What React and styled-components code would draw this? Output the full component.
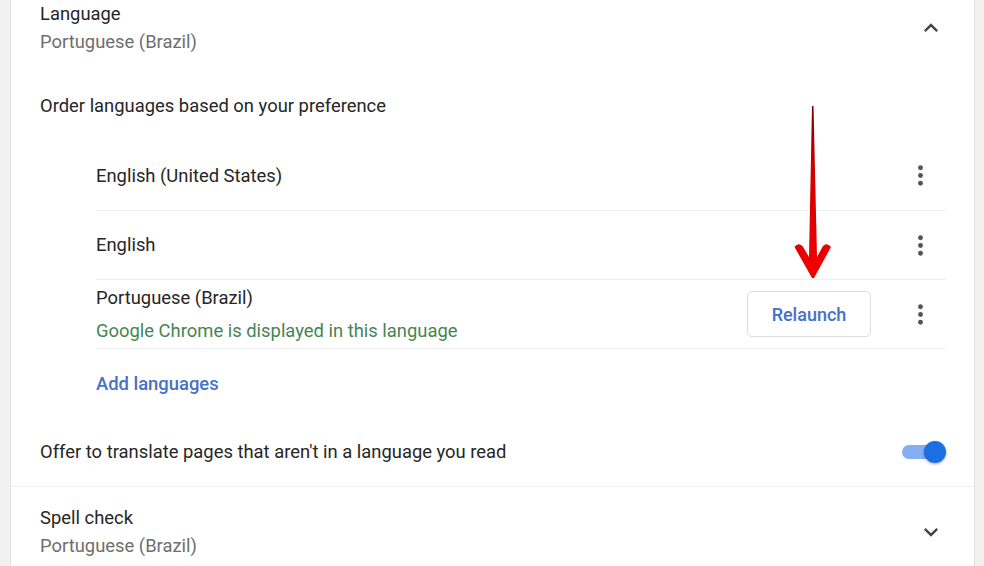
import React from "react";
import styled, { createGlobalStyle } from "styled-components";

const GlobalStyle = createGlobalStyle`
  html, body {
    margin: 0;
    padding: 0;
    background: #f1f1f1;
  }
  body {
    font-family: Roboto, "Liberation Sans", Arial, sans-serif;
  }
`;

const Page = styled.div`
  position: relative;
  width: 984px;
  height: 566px;
  overflow: hidden;
  background: #f1f1f1;
`;

const Card = styled.div`
  margin: 0 9px 0 10px;
  height: 566px;
  background: #fff;
  border-left: 1px solid #e0e0e0;
  border-right: 1px solid #e0e0e0;
`;

const Section = styled.div`
  padding: ${(p) => (p.$first ? "0" : "17px")} 28px 0 29px;
  border-bottom: ${(p) => (p.$divided ? "1px solid #eceeef" : "none")};
`;

const Header = styled.div`
  display: flex;
  align-items: center;
  justify-content: space-between;
`;

const Title = styled.div`
  font-size: 18.4px;
  line-height: 28px;
  color: #262626;
`;

const Sub = styled.div`
  font-size: 18.4px;
  line-height: 28px;
  color: #6e6e6e;
`;

const IconButton = styled.div`
  width: 30px;
  height: 30px;
  display: flex;
  align-items: center;
  justify-content: center;
  color: #444;
`;

const Label = styled.div`
  margin-top: 36px;
  font-size: 18.4px;
  line-height: 28px;
  color: #262626;
`;

const List = styled.div`
  margin: 21px 0 0 56px;
`;

const Row = styled.div`
  display: flex;
  align-items: center;
  height: 69px;
  border-top: ${(p) => (p.$first ? "none" : "1px solid #eceeef")};
  box-sizing: border-box;
`;

const RowText = styled.div`
  flex: 1;
`;

const Green = styled.div`
  margin-top: 5px;
  font-size: 18.4px;
  line-height: 28px;
  color: #448553;
`;

const Relaunch = styled.button`
  width: 124px;
  height: 46px;
  margin-right: 29px;
  background: #fff;
  border: 1px solid #dadce0;
  border-radius: 5px;
  font-family: inherit;
  font-size: 18px;
  font-weight: 500;
  color: #4571c7;
`;

const Kebab = styled.div`
  width: 40px;
  height: 40px;
  margin-right: 6px;
  display: flex;
  align-items: center;
  justify-content: center;
  color: #555;
`;

const AddRow = styled.div`
  display: flex;
  align-items: center;
  height: 70px;
  border-top: 1px solid #eceeef;
  box-sizing: border-box;
  font-size: 18.4px;
  font-weight: 500;
  color: #4571c7;
`;

const ToggleRow = styled.div`
  display: flex;
  align-items: center;
  justify-content: space-between;
  height: 68px;
`;

const Toggle = styled.div`
  position: relative;
  width: 44px;
  height: 22px;
`;

const Track = styled.div`
  position: absolute;
  left: 0;
  top: 4px;
  width: 38px;
  height: 14px;
  border-radius: 7px;
  background: ${(p) => (p.$on ? "#86aef2" : "#bdc1c6")};
`;

const Knob = styled.div`
  position: absolute;
  top: 0;
  left: ${(p) => (p.$on ? "22px" : "0")};
  width: 22px;
  height: 22px;
  border-radius: 50%;
  background: ${(p) => (p.$on ? "#1a6fe4" : "#fff")};
  box-shadow: 0 1px 3px rgba(0, 0, 0, 0.35);
`;

const Arrow = styled.svg`
  position: absolute;
  left: 790px;
  top: 100px;
`;

const Chevron = ({ up }) => (
  <svg width="28" height="28" viewBox="0 0 24 24" fill="currentColor">
    {up ? (
      <path d="M7.41 15.41L12 10.83l4.59 4.58L18 14l-6-6-6 6z" />
    ) : (
      <path d="M7.41 8.59L12 13.17l4.59-4.58L18 10l-6 6-6-6z" />
    )}
  </svg>
);

const MoreIcon = () => (
  <svg width="31" height="31" viewBox="0 0 24 24" fill="currentColor">
    <circle cx="12" cy="6" r="1.9" />
    <circle cx="12" cy="12" r="1.9" />
    <circle cx="12" cy="18" r="1.9" />
  </svg>
);

const languages = [
  { name: "English (United States)" },
  { name: "English" },
  { name: "Portuguese (Brazil)", note: "Google Chrome is displayed in this language", relaunch: true },
];

export default function App() {
  return (
    <Page>
      <GlobalStyle />
      <Card>
        <Section $first $divided>
          <Header>
            <div>
              <Title>Language</Title>
              <Sub>Portuguese (Brazil)</Sub>
            </div>
            <IconButton>
              <Chevron up />
            </IconButton>
          </Header>
          <Label>Order languages based on your preference</Label>
          <List>
            {languages.map((l, i) => (
              <Row key={l.name} $first={i === 0}>
                <RowText>
                  <Title>{l.name}</Title>
                  {l.note && <Green>{l.note}</Green>}
                </RowText>
                {l.relaunch && <Relaunch>Relaunch</Relaunch>}
                <Kebab>
                  <MoreIcon />
                </Kebab>
              </Row>
            ))}
            <AddRow>Add languages</AddRow>
          </List>
          <ToggleRow>
            <Title>Offer to translate pages that aren't in a language you read</Title>
            <Toggle>
              <Track $on />
              <Knob $on />
            </Toggle>
          </ToggleRow>
        </Section>
        <Section>
          <Header>
            <div>
              <Title>Spell check</Title>
              <Sub>Portuguese (Brazil)</Sub>
            </div>
            <IconButton>
              <Chevron />
            </IconButton>
          </Header>
        </Section>
      </Card>
      <Arrow width="46" height="185" viewBox="0 0 46 185">
        <defs>
          <linearGradient id="arrowFill" x1="0" y1="0" x2="0" y2="1">
            <stop offset="0" stopColor="#6e0000" />
            <stop offset="0.35" stopColor="#d00000" />
            <stop offset="1" stopColor="#f20000" />
          </linearGradient>
        </defs>
        <path
          d="M22 6 L23.5 6 L27 157 L33 146 Q37 142 41 147 L24 178 L22 178 L4.5 147 Q8 142 12.5 146 L19 157 Z"
          fill="url(#arrowFill)"
        />
      </Arrow>
    </Page>
  );
}
